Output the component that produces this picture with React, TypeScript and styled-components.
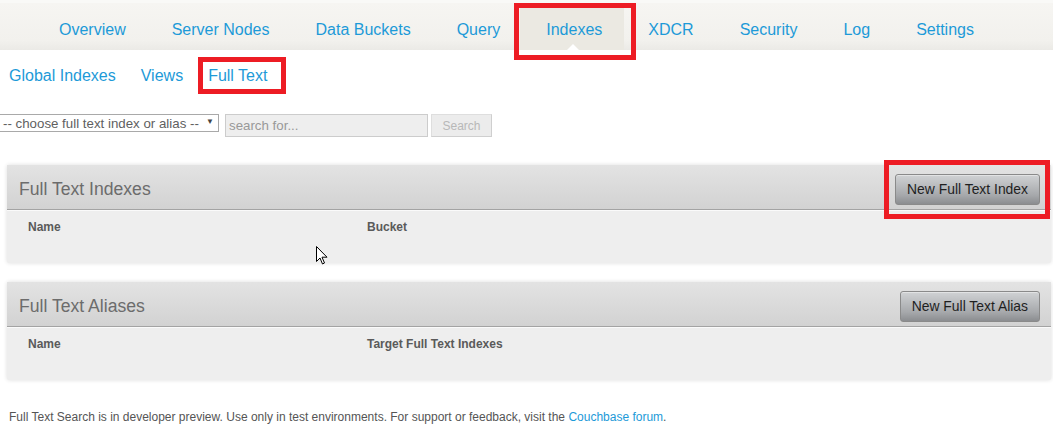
import React from "react";
import styled, { createGlobalStyle, css } from "styled-components";

const Global = createGlobalStyle`
  html, body { margin: 0; padding: 0; background: #fff; }
  body { font-family: "Liberation Sans", Arial, sans-serif; color: #555; overflow: hidden; }
  * { box-sizing: border-box; }
`;

const LINK = "#1d9ad8";
const RED = "#ed1c24";

type Box = { t: number; r: number; b: number; l: number };

const annotate = (box?: Box) =>
  box
    ? css`
        position: relative;
        &::after {
          content: "";
          position: absolute;
          top: ${-box.t}px;
          right: ${-box.r}px;
          bottom: ${-box.b}px;
          left: ${-box.l}px;
          border: 5px solid ${RED};
          pointer-events: none;
        }
      `
    : "";

const Page = styled.div`
  width: 1053px;
  height: 428px;
  position: relative;
  display: flex;
  flex-direction: column;
`;

const NavBar = styled.nav`
  height: 50px;
  flex: none;
  border-top: 3px solid #f9f9f7;
  background: linear-gradient(#f6f5f2, #f2f1ed 80%, #ebeae6);
  display: flex;
  align-items: flex-end;
  padding-left: 36px;
`;

const NavItem = styled.a<{ $active?: boolean; $box?: Box }>`
  height: 42px;
  display: flex;
  align-items: center;
  padding: 1px 23px 0;
  font-size: 16px;
  color: ${LINK};
  text-decoration: none;
  white-space: nowrap;
  ${(p) =>
    p.$active &&
    css`
      background: #ebe9e2;
      padding: 1px 22px 0 26px;
      margin: 0 1px 0 -3px;
      &::before {
        content: "";
        position: absolute;
        bottom: 0;
        left: 50%;
        margin-left: -5px;
        border-left: 6px solid transparent;
        border-right: 6px solid transparent;
        border-bottom: 6px solid #fff;
      }
    `}
  ${(p) => annotate(p.$box)}
`;

const SubTabs = styled.div`
  display: flex;
  flex: none;
  gap: 25px;
  padding: 17px 0 0 9px;
  height: 64px;
`;

const SubTab = styled.a<{ $box?: Box }>`
  font-size: 16px;
  line-height: 18px;
  height: 18px;
  color: ${LINK};
  text-decoration: none;
  ${(p) => annotate(p.$box)}
`;

const Toolbar = styled.div`
  display: flex;
  flex: none;
  align-items: flex-start;
  height: 51px;
  margin-left: -1px;
`;

const Select = styled.div`
  width: 220px;
  height: 18px;
  border: 1px solid #a9a9a9;
  display: flex;
  align-items: center;
  justify-content: space-between;
  padding: 0 4px 0 3px;
  font-size: 13.3px;
  color: #5f5f5f;
  white-space: nowrap;
`;

const Caret = styled.span`
  font-size: 8px;
  color: #444;
  margin-top: -3px;
`;

const SearchInput = styled.div`
  width: 203px;
  height: 23px;
  margin-left: 6px;
  background: #eeeeee;
  border: 1px solid #cccccc;
  display: flex;
  align-items: center;
  padding-left: 3px;
  font-size: 13.3px;
  color: #999;
`;

const SearchButton = styled.div`
  width: 61px;
  height: 23px;
  margin-left: 3px;
  background: #ececec;
  border: 1px solid #dedede;
  border-bottom-color: #cfcfcf;
  border-right-color: #cfcfcf;
  display: flex;
  align-items: center;
  justify-content: center;
  font-size: 12px;
  color: #b8b8b8;
`;

const Panel = styled.section`
  flex: none;
  margin: 0 2px 19px 7px;
  height: 98px;
  background: #eeeeee;
  box-shadow: 0 0 4px rgba(0, 0, 0, 0.14);
  border-radius: 2px;
  display: flex;
  flex-direction: column;
`;

const PanelHeader = styled.header`
  height: 45px;
  flex: none;
  background: linear-gradient(#e3e3e3, #d2d2d2);
  border-bottom: 1px solid #a3a3a3;
  box-shadow: 0 1px 0 #fafafa;
  display: flex;
  align-items: center;
  justify-content: space-between;
  padding: 4px 11px 0 12px;
`;

const PanelTitle = styled.h2`
  margin: 0;
  font-weight: normal;
  font-size: 17.6px;
  color: #6c6c6c;
`;

const ActionButton = styled.button<{ $box?: Box }>`
  height: 31px;
  padding: 0 11px;
  border: 1px solid #8a8a8a;
  border-radius: 3px;
  background: linear-gradient(#d0d2d4, #a6a8ab 70%, #8b8d90);
  box-shadow: inset 0 1px 0 rgba(255, 255, 255, 0.4);
  font-family: "Liberation Sans", Arial, sans-serif;
  font-size: 13.9px;
  color: #1f1f1f;
  ${(p) => annotate(p.$box)}
`;

const ColumnRow = styled.div`
  display: grid;
  grid-template-columns: 339px 1fr;
  padding: 10px 0 0 21px;
  font-size: 12px;
  font-weight: bold;
  color: #5a5a5a;
`;

const Footer = styled.p`
  margin: 11px 0 0 9px;
  font-size: 12px;
  color: #555;
`;

const FooterLink = styled.a`
  color: ${LINK};
  text-decoration: none;
`;

const Cursor = styled.svg`
  position: absolute;
  left: 316px;
  top: 246px;
`;

const navItems = [
  "Overview",
  "Server Nodes",
  "Data Buckets",
  "Query",
  "Indexes",
  "XDCR",
  "Security",
  "Log",
  "Settings",
];

export default function App() {
  return (
    <Page>
      <Global />
      <NavBar>
        {navItems.map((n) =>
          n === "Indexes" ? (
            <NavItem key={n} $active $box={{ t: 5, r: 12, b: 10, l: 6 }}>
              {n}
            </NavItem>
          ) : (
            <NavItem key={n}>{n}</NavItem>
          )
        )}
      </NavBar>
      <SubTabs>
        <SubTab>Global Indexes</SubTab>
        <SubTab>Views</SubTab>
        <SubTab $box={{ t: 10, r: 19, b: 9, l: 10 }}>Full Text</SubTab>
      </SubTabs>
      <Toolbar>
        <Select>
          <span>-- choose full text index or alias --</span>
          <Caret>▼</Caret>
        </Select>
        <SearchInput>search for...</SearchInput>
        <SearchButton>Search</SearchButton>
      </Toolbar>
      <Panel>
        <PanelHeader>
          <PanelTitle>Full Text Indexes</PanelTitle>
          <ActionButton $box={{ t: 15, r: 11, b: 15, l: 12 }}>New Full Text Index</ActionButton>
        </PanelHeader>
        <ColumnRow>
          <span>Name</span>
          <span>Bucket</span>
        </ColumnRow>
      </Panel>
      <Panel>
        <PanelHeader>
          <PanelTitle>Full Text Aliases</PanelTitle>
          <ActionButton>New Full Text Alias</ActionButton>
        </PanelHeader>
        <ColumnRow>
          <span>Name</span>
          <span>Target Full Text Indexes</span>
        </ColumnRow>
      </Panel>
      <Footer>
        Full Text Search is in developer preview. Use only in test environments. For support or
        feedback, visit the <FooterLink>Couchbase forum</FooterLink>.
      </Footer>
      <Cursor width="12" height="20" viewBox="0 0 12 20">
        <path d="M0.5 0.5 L0.5 15.5 L4 12 L6.5 18 L8.5 17 L6 11.2 L11 11.2 Z" fill="#fff" stroke="#000" strokeWidth="1" />
      </Cursor>
    </Page>
  );
}
